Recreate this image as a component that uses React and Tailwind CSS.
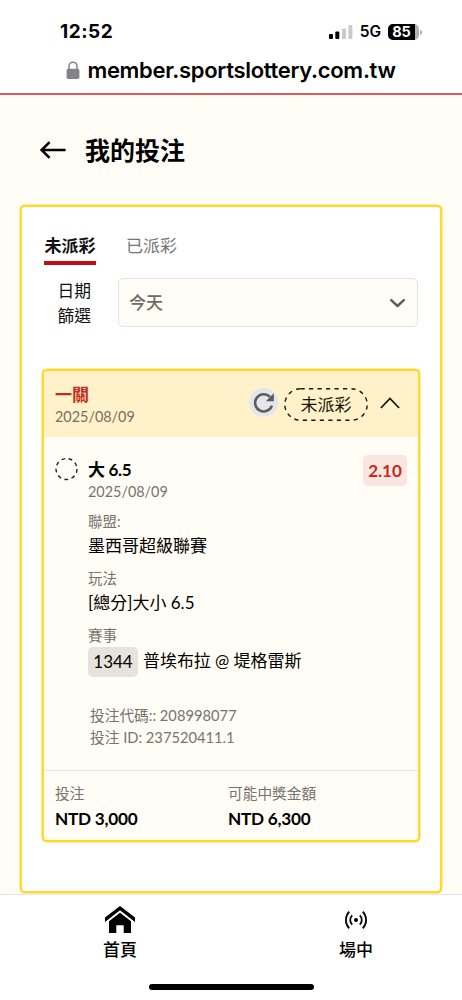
import { useState } from 'react'

// ── Icons ─────────────────────────────────────────────────────────────────────

function LockIcon() {
  return (
    <svg width="14" height="19" viewBox="0 0 14 19" fill="none">
      <rect x="0.6" y="7.800" width="12.8" height="10.3" rx="1.8" fill="#828287" />
      <path d="M3 8.5V5.2a4 4 0 0 1 8 0v3.3" stroke="#828287" strokeWidth="1.5" />
    </svg>
  )
}

function SignalIcon() {
  return (
    <svg width="24" height="15" viewBox="0 0 24 15">
      <rect x="0" y="9" width="4" height="5" rx="1" fill="#000" />
      <rect x="6.3" y="6.6" width="4" height="7.4" rx="1" fill="#000" />
      <rect x="13" y="3.4" width="4" height="10.6" rx="1" fill="#cacaca" />
      <rect x="19.4" y="0" width="4" height="14" rx="1" fill="#cacaca" />
    </svg>
  )
}

function BackIcon() {
  return (
    <svg width="26" height="18" viewBox="0 0 26 18" fill="none" stroke="#000" strokeWidth="2.5">
      <path d="M25.600 9H1.6M9.6 1.2 1.6 9l8 7.8" />
    </svg>
  )
}

function ReloadIcon() {
  return (
    <svg width="22" height="22" viewBox="0 0 22 22" fill="none">
      <path d="M18.9 13.6A8.6 8.6 0 1 1 17 4.9" stroke="#5c5c5e" strokeWidth="2.6" />
      <path d="M20.8 1.3v8h-8z" fill="#5c5c5e" />
    </svg>
  )
}

function HomeIcon() {
  return (
    <svg width="30" height="27" viewBox="0 0 30 27" fill="#000">
      <path d="M15 0 30 11.6v4.3L15 4.3 0 15.900V11.600z" />
      <path d="M15 6.800 26 15.300V27h-7.300v-7.700h-7.400V27H4V15.300z" />
    </svg>
  )
}

function LiveIcon() {
  return (
    <svg width="24" height="18" viewBox="0 0 24 18" fill="none" stroke="#000" strokeWidth="1.800">
      <circle cx="12" cy="9" r="2" fill="#000" stroke="none" />
      <path d="M8.200 4.400a6.300 6.300 0 0 0 0 9.200M15.800 4.400a6.300 6.300 0 0 1 0 9.200" />
      <path d="M5.200.6a12.400 12.400 0 0 0 0 16.800M18.800.6a12.400 12.400 0 0 1 0 16.800" />
    </svg>
  )
}

// ── Browser chrome ────────────────────────────────────────────────────────────

function StatusBar() {
  return (
    <header className="h-[95px] shrink-0 bg-white border-b-2 border-[#df5a59] font-[Inter,sans-serif] text-black">
      <div className="flex items-center pt-5 pl-[60px] pr-[40px]">
        <span className="text-[19px] leading-6 font-bold tracking-[0.5px] mr-auto">12:52</span>
        <SignalIcon />
        <span className="ml-[7px] text-[15.500px] leading-6 font-semibold">5G</span>
        <div className="ml-[7px] flex items-center">
          <div className="flex h-4 w-[31px] rounded-[5px] bg-[#b3b3b3]">
            <span className="w-[27px] rounded-l-[5px] bg-black text-white text-center text-[14.500px] leading-4 font-bold">85</span>
          </div>
          <span className="ml-px h-[5px] w-[2px] rounded-r-full bg-[#b3b3b3]" />
        </div>
      </div>
      <div className="flex items-center justify-center gap-[7px] mt-3">
        <LockIcon />
        <span className="text-[22px] leading-7 font-semibold tracking-[-0.300px]">member.sportslottery.com.tw</span>
      </div>
    </header>
  )
}

// ── Filters ───────────────────────────────────────────────────────────────────

const TABS = ['未派彩', '已派彩']

function Tabs({ active, onChange }) {
  return (
    <div className="flex gap-[30px] pl-[22px] pt-[23px]">
      {TABS.map((tab) => (
        <button
          key={tab}
          type="button"
          onClick={() => onChange(tab)}
          className={`h-[35px] w-[52px] text-[17px] whitespace-nowrap border-b-4 ${
            active === tab
              ? 'font-bold text-[#111] leading-[27px] border-[#c10d15]'
              : 'pr-px text-[#767676] leading-[32px] border-transparent'
          }`}
        >
          {tab}
        </button>
      ))}
    </div>
  )
}

function DateFilter() {
  return (
    <div className="flex mt-[13px] pl-[22px]">
      <div className="w-[47px] text-right text-[16.800px] leading-[25px] text-[#111]">
        日期
        <br />
        篩選
      </div>
      <button
        type="button"
        className="ml-[27px] flex h-[49px] w-[300px] items-center justify-between rounded-[5px] border border-[#e6e4dc] bg-[#fffdf5] pl-[10px] pr-3 text-[17px] font-medium text-[#6b6b66]"
      >
        今天
        <svg className="mt-0.5" width="15" height="9" viewBox="0 0 15 9" fill="none" stroke="#5e5d5a" strokeWidth="2.4">
          <path d="m1.200 1.200 6.300 5.800 6.300-5.800" strokeLinecap="round" strokeLinejoin="round" />
        </svg>
      </button>
    </div>
  )
}

// ── Bet card ──────────────────────────────────────────────────────────────────

function StatusPill({ children }) {
  return (
    <span className="relative ml-1.5 flex h-[33px] w-[84px] items-center justify-center text-[17px] text-[#161608]">
      <svg className="absolute inset-0" width="84" height="33" viewBox="0 0 84 33" fill="none">
        <rect x="0.8" y="0.8" width="82.4" height="31.400" rx="15.700" stroke="#161608" strokeWidth="1.400" strokeDasharray="4.200 4.300" />
      </svg>
      {children}
    </span>
  )
}

function Detail({ label, children }) {
  return (
    <div className="h-[57px]">
      <p className="text-[14.500px] leading-[21px] text-[#75746f]">{label}</p>
      <div className="flex h-[28px] items-center text-[17px] text-black">{children}</div>
    </div>
  )
}

function Amount({ label, value }) {
  return (
    <div className="w-[173px]">
      <p className="text-[14.700px] leading-5 text-[#75746f]">{label}</p>
      <p className="mt-1 text-[17.200px] leading-6 font-bold tracking-[-0.250px] text-black">{value}</p>
    </div>
  )
}

function BetCard() {
  return (
    <article className="mx-auto mt-[41px] h-[473px] w-[378px] overflow-hidden rounded-[5px] border-2 border-[#ffd92e] bg-[#fffdf5] shadow-[0_0_0_0.5px_#ffd92e]">
      <div className="flex h-[66px] items-start bg-[#fff1c9] pl-[11px] pr-[18px]">
        <div className="mr-auto pt-[13px]">
          <p className="text-[17px] leading-[22px] font-bold text-[#c42b20]">一關</p>
          <p className="text-[14.400px] leading-[21px] text-[#77705f]">2025/08/09</p>
        </div>
        <button type="button" className="mt-[17px] flex size-[29px] items-center justify-center rounded-full bg-[#e5e6e9]">
          <ReloadIcon />
        </button>
        <div className="mt-[17px]">
          <StatusPill>未派彩</StatusPill>
        </div>
        <svg className="mt-[26px] ml-3" width="20" height="12" viewBox="0 0 20 12" fill="none" stroke="#161608" strokeWidth="1.800">
          <path d="m0.900 11 9.100-9.500 9.100 9.500" />
        </svg>
      </div>

      <div className="flex h-[333px] items-start pl-[10px] pr-[11px] pt-[18px]">
        <svg className="mt-[2px] shrink-0" width="24" height="24" viewBox="0 0 24 24" fill="none">
          <circle cx="12.500" cy="12" r="10.500" stroke="#222" strokeWidth="1.400" strokeDasharray="3.800 3.530" />
        </svg>
        <div className="ml-[10px] flex-1">
          <p className="mt-1 text-[17px] leading-[22px] font-bold tracking-[-0.300px] text-black">大 6.5</p>
          <p className="text-[14.400px] leading-[22px] text-[#75746f]">2025/08/09</p>
          <div className="mt-2">
            <Detail label="聯盟:">墨西哥超級聯賽</Detail>
            <Detail label="玩法">[總分]大小 6.5</Detail>
            <Detail label="賽事">
              <span className="mt-[3px] mr-[5px] flex h-[30px] w-[50px] items-center justify-center rounded-[5px] bg-[#e6e3dc]">
                1344
              </span>
              <span className="mt-0.5 tracking-[-0.050px]">普埃布拉 @ 堤格雷斯</span>
            </Detail>
          </div>
          <div className="mt-[22px] pl-[2px] text-[14.700px] leading-[22px] text-[#75746f]">
            <p>投注代碼:: 208998077</p>
            <p>投注 ID: 237520411.1</p>
          </div>
        </div>
        <span className="h-[31px] w-[44px] rounded-[5px] bg-[#f9e6e0] text-center text-[17px] leading-[32px] font-bold text-[#c42b20]">
          2.10
        </span>
      </div>

      <div className="flex border-t border-[#e8e6df] pl-[11px] pt-[12px]">
        <Amount label="投注" value="NTD 3,000" />
        <Amount label="可能中獎金額" value="NTD 6,300" />
      </div>
    </article>
  )
}

// ── Bottom nav ────────────────────────────────────────────────────────────────

function BottomNav() {
  return (
    <nav className="flex h-[106px] shrink-0 flex-col border-t border-[#e8e8e8] bg-white text-[17px] font-medium text-black">
      <div className="flex pl-[2px]">
        <button type="button" className="flex w-[236px] shrink-0 flex-col items-center">
          <span className="flex h-[43px] items-center pt-[5px]"><HomeIcon /></span>
          <span className="leading-6">首頁</span>
        </button>
        <button type="button" className="flex w-[236px] shrink-0 flex-col items-center">
          <span className="flex h-[43px] items-center pt-[6px]"><LiveIcon /></span>
          <span className="leading-6">場中</span>
        </button>
      </div>
      <div className="mx-auto mt-[22px] h-[6px] w-[165px] rounded-full bg-black" />
    </nav>
  )
}

// ── App root ──────────────────────────────────────────────────────────────────

export default function App() {
  const [tab, setTab] = useState('未派彩')

  return (
    <div
      lang="zh-Hant"
      className="flex h-[1000px] w-[462px] flex-col overflow-hidden bg-[#fffdf5] font-[Lato,'Noto_Sans_CJK_TC',sans-serif]"
    >
      <StatusBar />
      <main className="flex-1">
        <div className="flex h-[110px] items-center gap-[19px] pl-10">
          <BackIcon />
          <h1 className="text-[25px] leading-9 font-bold text-black">我的投注</h1>
        </div>
        <section className="ml-5 h-[688px] w-[422px] rounded-[5px] border-2 border-[#ffd92e] bg-white shadow-[0_0_0_0.5px_#ffd92e]">
          <Tabs active={tab} onChange={setTab} />
          <DateFilter />
          <BetCard />
        </section>
      </main>
      <BottomNav />
    </div>
  )
}
